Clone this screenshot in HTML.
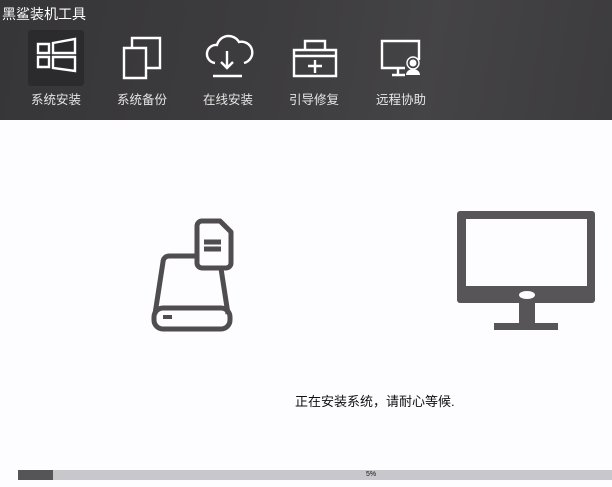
<!DOCTYPE html><html><head><meta charset="utf-8"><style>
body{margin:0;width:612px;height:487px;background:#fdfcfe;font-family:"Liberation Sans","Noto Sans CJK SC",sans-serif;position:relative;overflow:hidden}
.hd{position:absolute;left:0;top:0;width:612px;height:120px;background:linear-gradient(100deg,#363537 0%,#3d3c3e 45%,#444345 70%,#3c3b3d 100%)}
.t{position:absolute;left:2px;top:4px;color:#fff;font-size:14px}
.nav{position:absolute;top:89px;color:#e6e6e6;font-size:12.5px;width:80px;text-align:center}
.sel{position:absolute;left:28px;top:30px;width:56px;height:56px;background:#2b2a2c;border-radius:3px}
svg{position:absolute}
</style></head><body>
<div class="hd">
<div class="t">黑鲨装机工具</div>
<div class="sel"></div>
<svg style="left:0;top:0" width="460" height="90" fill="none" stroke="#fff" stroke-width="2.4">
<path d="M38 44h11v9H38zM53 43l22-4v14H53zM38 57h11v10H38zM53 57h22v14l-22-3z"/>
<path d="M124 48h22v30h-22zM132 48v-10h28v30h-14"/>
<path d="M215 63a9 9 0 0 1 2-18a12 12 0 0 1 22-3a10 10 0 0 1 5 21M227 51v17M221 62l6 6 6-6M213 76h29"/>
<path d="M294 50h42v26h-42zM305 50v-9h20v9M294 56h42M315 60v13M308 66h14"/>
<path d="M419 60v-19h-37v27h23M398 68v6M392 75h13"/>
<circle cx="413" cy="63" r="6" stroke-width="1.4"/>
<circle cx="413" cy="63" r="3.5" fill="#fff" stroke="none"/>
<path d="M406 75a7 6 0 0 1 14 0z" fill="#fff" stroke="none"/>
</svg>
<div class="nav" style="left:16px">系统安装</div>
<div class="nav" style="left:102px">系统备份</div>
<div class="nav" style="left:188px">在线安装</div>
<div class="nav" style="left:274px">引导修复</div>
<div class="nav" style="left:361px">远程协助</div>
</div>
<svg style="left:140px;top:200px" width="470" height="140">
<g fill="none" stroke="#4f4d50" stroke-width="5" stroke-linejoin="round">
<path d="M15 114L23 62a6 6 0 0 1 6-6h45a6 6 0 0 1 6 6l8 52"/>
<rect x="14" y="108" width="76" height="21" rx="9"/>
<path d="M57 63V26a5 5 0 0 1 5-5h18l11 11v31a5 5 0 0 1-5 5H62a5 5 0 0 1-5-5z" fill="#fdfcfe"/>
<path d="M64 42h17M64 49h17"/>
</g>
<rect x="23" y="115" width="9" height="4" fill="#4f4d50"/>
<rect x="317" y="11" width="138" height="92" rx="3" fill="#575558"/>
<rect x="326" y="19" width="121" height="67" fill="#fdfcfe"/>
<ellipse cx="387" cy="95" rx="8" ry="4" fill="#fdfcfe"/>
<rect x="379" y="103" width="16" height="22" fill="#575558"/>
<rect x="354" y="123" width="64" height="7" fill="#575558"/>
</svg>
<div style="position:absolute;left:295px;top:391px;font-size:13px;color:#111">正在安装系统，请耐心等候.</div>
<div style="position:absolute;left:18px;top:470px;width:594px;height:10px;background:#c8c8cc"></div>
<div style="position:absolute;left:18px;top:470px;width:35px;height:10px;background:#555457"></div>
<div style="position:absolute;left:366px;top:470px;font-size:7px;line-height:10px;color:#111">5%</div>
</body></html>
